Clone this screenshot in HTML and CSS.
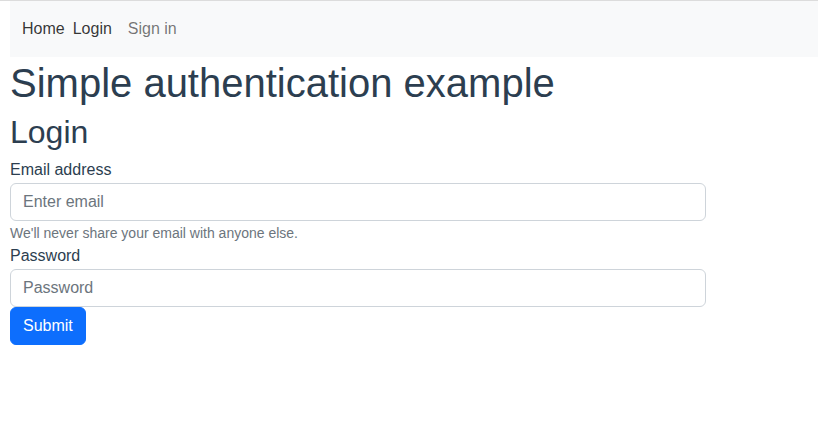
FILE: index.html
```html
<!DOCTYPE html>
<html>
<head>
<meta charset="utf-8">
<link rel="stylesheet" href="styles.css">
</head>
<body>
<div class="topline"></div>
<div class="app">
  <nav class="navbar">
    <a class="nav-link active" href="#">Home</a>
    <a class="nav-link active" href="#">Login</a>
    <a class="nav-link muted" href="#">Sign in</a>
  </nav>
  <h1 class="title">Simple authentication example</h1>
  <h2 class="subtitle">Login</h2>
  <form class="form">
    <label class="label" for="email">Email address</label>
    <input class="input" id="email" type="email" placeholder="Enter email">
    <div class="help">We'll never share your email with anyone else.</div>
    <label class="label" for="pw">Password</label>
    <input class="input" id="pw" type="password" placeholder="Password">
    <div><button class="btn" type="button">Submit</button></div>
  </form>
</div>
</body>
</html>
```
FILE: styles.css
```css
html, body { margin: 0; padding: 0; }
body {
  font-family: "Liberation Sans", Arial, sans-serif;
  font-size: 16px;
  line-height: 1.5;
  color: #2c3e50;
  background: #fff;
}
.topline { height: 1px; background: #dcdcdc; }
.app { padding-left: 10px; }
.navbar {
  display: flex;
  align-items: center;
  height: 56px;
  background: #f8f9fa;
  padding-left: 12px;
}
.nav-link {
  text-decoration: none;
  font-size: 16px;
}
.nav-link.active { color: rgba(0,0,0,0.8); margin-right: 8px; }
.nav-link.muted { color: rgba(0,0,0,0.55); margin-left: 8px; }
.title {
  margin: 2px 0 6px 0;
  font-size: 40px;
  font-weight: 400;
  line-height: 48px;
}
.subtitle {
  margin: 0 0 7px 0;
  font-size: 32px;
  font-weight: 400;
  line-height: 38px;
}
.form { width: 696px; }
.label { display: block; line-height: 24px; margin-bottom: 1px; }
.input {
  display: block;
  box-sizing: border-box;
  width: 100%;
  height: 38px;
  padding: 6px 12px;
  font-family: inherit;
  font-size: 16px;
  color: #212529;
  border: 1px solid #ced4da;
  border-radius: 6px;
  outline: none;
}
.input::placeholder { color: #6c757d; }
.help {
  font-size: 14px;
  color: #6c757d;
  margin-top: 2px;
  line-height: 21px;
}
.btn {
  display: block;
  height: 38px;
  padding: 6px 12px;
  font-family: inherit;
  font-size: 16px;
  color: #fff;
  background: #0d6efd;
  border: 1px solid #0d6efd;
  border-radius: 6px;
}
```
